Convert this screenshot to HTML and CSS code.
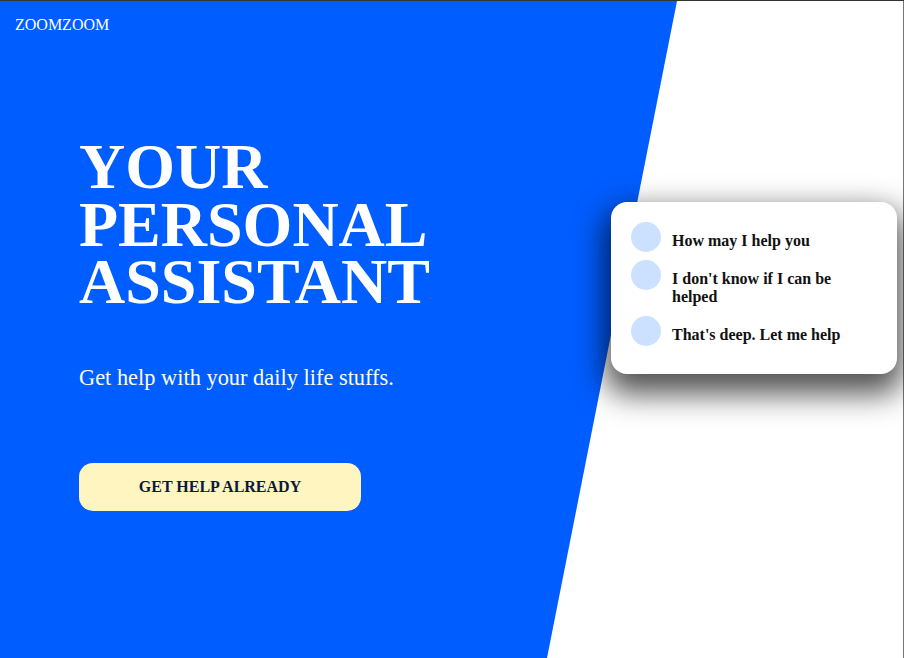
FILE: index.html
```html
<!DOCTYPE html>
<html lang="en">
<head>
<meta charset="utf-8">
<title>ZoomZoom</title>
<link rel="stylesheet" href="styles.css">
</head>
<body>
<div class="page">
  <header class="brand">ZOOMZOOM</header>
  <main class="main">
    <section class="hero">
      <h1 class="title">YOUR<br>PERSONAL<br>ASSISTANT</h1>
      <p class="subtitle">Get help with your daily life stuffs.</p>
      <button class="cta">GET HELP ALREADY</button>
    </section>
    <aside class="card">
      <div class="msg"><span class="avatar"></span><p class="msg-text">How may I help you</p></div>
      <div class="msg"><span class="avatar"></span><p class="msg-text">I don't know if I can be helped</p></div>
      <div class="msg"><span class="avatar"></span><p class="msg-text">That's deep. Let me help</p></div>
    </aside>
  </main>
</div>
</body>
</html>
```

FILE: styles.css
```css
html, body {
  margin: 0;
  padding: 0;
}
body {
  background: #ffffff;
  border-top: 1px solid #333333;
  font-family: "Liberation Serif", "Times New Roman", serif;
  overflow: hidden;
}
.page {
  position: relative;
  height: 657px;
  border-right: 1px solid #777777;
  display: flex;
  flex-direction: column;
}
.page::before {
  content: "";
  position: absolute;
  inset: 0;
  background: #005dff;
  clip-path: polygon(0 0, 677px 0, 547px 100%, 0 100%);
  z-index: 0;
}
.brand {
  position: relative;
  z-index: 1;
  color: #ffffff;
  font-size: 16px;
  line-height: 18px;
  padding: 15px 15px 0;
}
.main {
  position: relative;
  z-index: 1;
  flex: 1;
  display: flex;
  justify-content: space-between;
  align-items: flex-start;
}
.hero {
  padding-left: 79px;
  display: flex;
  flex-direction: column;
  align-items: flex-start;
}
.title {
  margin: 104px 0 0;
  color: #ffffff;
  font-size: 64px;
  line-height: 57.6px;
  font-weight: bold;
}
.subtitle {
  margin: 54px 0 0;
  color: #ffffff;
  font-size: 22.4px;
  line-height: 25px;
}
.cta {
  margin-top: 73px;
  width: 282px;
  height: 48px;
  border: none;
  border-radius: 14px;
  background: #fff5c0;
  color: #0b1a3a;
  font-family: "Liberation Serif", "Times New Roman", serif;
  font-weight: bold;
  font-size: 16px;
  padding: 0;
}
.card {
  margin-top: 168px;
  margin-right: 6px;
  width: 246px;
  padding: 20px;
  background: #ffffff;
  border-radius: 16px;
  box-shadow: 0 14px 30px 6px rgba(0, 0, 0, 0.68);
}
.msg {
  display: flex;
  align-items: flex-start;
  gap: 11px;
}
.avatar {
  flex: none;
  width: 30px;
  height: 30px;
  border-radius: 50%;
  background: #cce0ff;
}
.msg-text {
  margin: 0;
  padding: 10px 0 10px;
  font-size: 16px;
  line-height: 18px;
  font-weight: bold;
  color: #111111;
}
```
